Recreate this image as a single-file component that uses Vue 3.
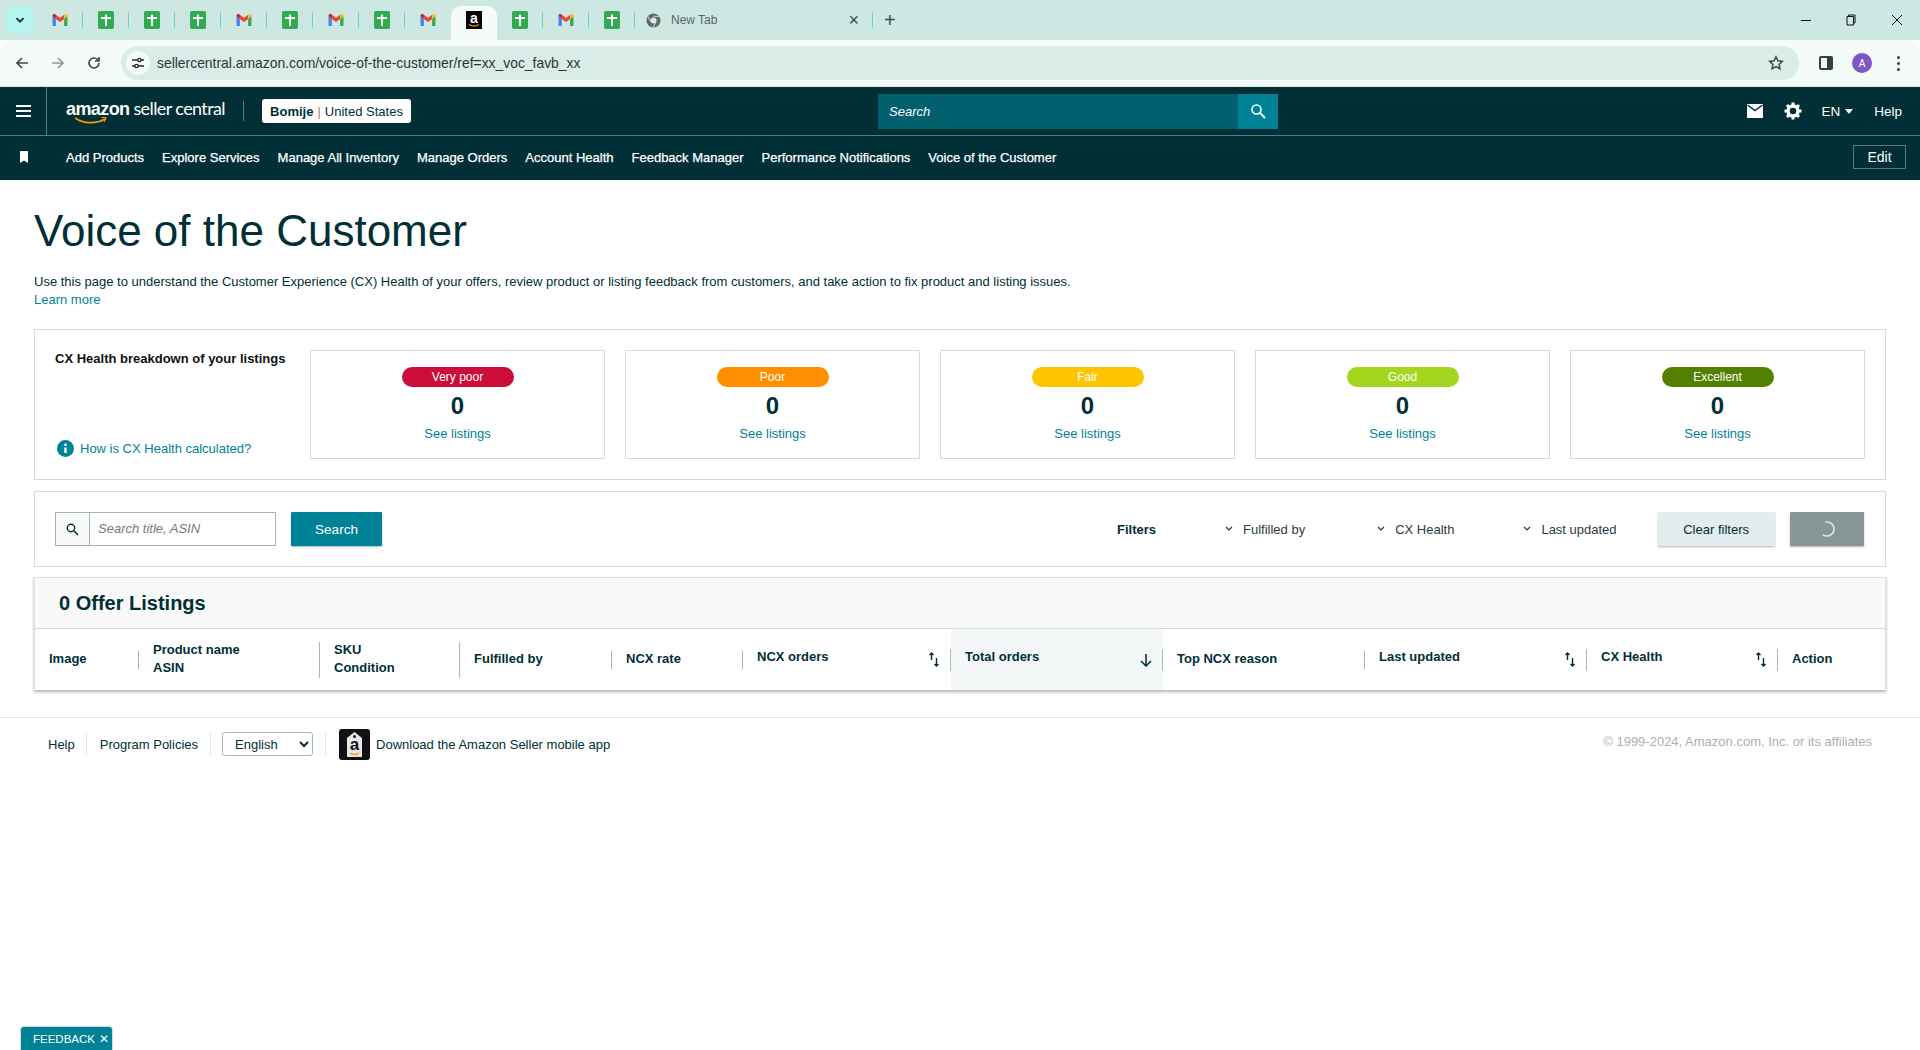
<template>
  <div class="page">
    <!-- browser chrome -->
    <div class="tabstrip">
      <div class="tab-search">
        <svg width="10" height="10" viewBox="0 0 10 10"><path d="M1.5 3.2 5 6.8l3.5-3.6" fill="none" stroke="#1f2b2a" stroke-width="1.8" /></svg>
      </div>
      <div v-for="(t, i) in tabs" :key="i" class="tab" :class="{ active: t === 'a', nosep: t === 'a' || tabs[i + 1] === 'a' }">
        <svg v-if="t === 'm'" width="18" height="18" viewBox="0 0 24 24">
          <path d="M2 7v13h4.5V10.5z" fill="#4285f4" />
          <path d="M22 7v13h-4.500V10.500z" fill="#34a853" />
          <path d="M6.500 10.500 12 14.800l5.500-4.300V5L12 9.300 6.500 5z" fill="#ea4335" />
          <path d="M17.500 5v5.500L22 7V6.500c0-2.500-2.600-3.200-4-1.900z" fill="#fbbc04" />
          <path d="M2 7l4.500 3.500V5L6 4.600C4.600 3.300 2 4 2 6.500z" fill="#c5221f" />
        </svg>
        <svg v-else-if="t === 's'" width="16" height="18" viewBox="0 0 16 18">
          <rect width="16" height="18" rx="2" fill="#34a853" />
          <path d="M3 7h10M8 3.500V15" stroke="#fff" stroke-width="1.800" />
        </svg>
        <svg v-else width="16" height="18" viewBox="0 0 16 18">
          <rect width="16" height="18" fill="#000" />
          <text x="8" y="11.500" text-anchor="middle" class="fav-a">a</text>
          <path d="M3 13.500c3 2 7 2 10 0" fill="none" stroke="#f90" stroke-width="1.300" />
        </svg>
      </div>
      <div class="tab newtab">
        <svg width="15" height="15" viewBox="0 0 16 16">
          <circle cx="8" cy="8" r="7.500" fill="#5f6b69" />
          <circle cx="8" cy="8" r="3.200" fill="#dce9e6" />
          <path d="M8 3.500h6.500M5 9 2 3.500M10.500 9.500l-3 6" stroke="#dce9e6" stroke-width="1" />
        </svg>
        <span class="newtab-label">New Tab</span>
        <span class="newtab-x">×</span>
      </div>
      <span class="plus">+</span>
      <div class="win">
        <span class="w-min"></span>
        <svg width="12" height="12" viewBox="0 0 12 12"><path d="M3.500 2.500V1h6.500v8H8.500M2 2.500h6.500V11H2z" fill="none" stroke="#111" stroke-width="1" /></svg>
        <svg width="12" height="12" viewBox="0 0 12 12"><path d="M1 1l10 10M11 1 1 11" stroke="#111" stroke-width="1" /></svg>
      </div>
    </div>
    <div class="toolbar">
      <svg class="tb-ico" width="16" height="16" viewBox="0 0 16 16"><path d="M14 8H3M8 3 3 8l5 5" fill="none" stroke="#3c4a48" stroke-width="1.700" /></svg>
      <svg class="tb-ico" width="16" height="16" viewBox="0 0 16 16"><path d="M2 8h11M8 3l5 5-5 5" fill="none" stroke="#8d9a97" stroke-width="1.700" /></svg>
      <svg class="tb-ico" width="16" height="16" viewBox="0 0 16 16"><path d="M13 8a5 5 0 1 1-1.500-3.600L13 6M13 2v4H9" fill="none" stroke="#3c4a48" stroke-width="1.600" /></svg>
      <div class="address">
        <span class="site-chip">
          <svg width="14" height="14" viewBox="0 0 14 14"><path d="M1 4h6M10 4h3M1 10h3M7 10h6" stroke="#1f2b2a" stroke-width="1.300" /><circle cx="8.500" cy="4" r="1.700" fill="none" stroke="#1f2b2a" stroke-width="1.300" /><circle cx="5.500" cy="10" r="1.700" fill="none" stroke="#1f2b2a" stroke-width="1.300" /></svg>
        </span>
        <span class="url">sellercentral.amazon.com/voice-of-the-customer/ref=xx_voc_favb_xx</span>
        <svg class="star" width="16" height="16" viewBox="0 0 16 16"><path d="m8 1.800 1.900 4 4.400.6-3.200 3 .8 4.400L8 11.700l-3.900 2.100.8-4.400-3.200-3 4.400-.6z" fill="none" stroke="#3c4a48" stroke-width="1.500" /></svg>
      </div>
      <svg class="panel" width="14" height="14" viewBox="0 0 14 14"><rect x="1" y="1" width="12" height="12" rx="1" fill="none" stroke="#2f4240" stroke-width="2" /><rect x="8" y="1" width="5" height="12" fill="#2f4240" /></svg>
      <span class="avatar">A</span>
      <span class="dots"><i></i><i></i><i></i></span>
    </div>

    <!-- seller central header -->
    <header class="sc-top">
      <button class="burger"><i></i><i></i><i></i></button>
      <div class="logo">
        <span class="logo-a">amazon<svg class="smile" width="34" height="8" viewBox="0 0 34 8"><path d="M1 1c9 6 21 6 30 1" fill="none" stroke="#f90" stroke-width="1.600" /><path d="m27 0 5 1-2 4" fill="none" stroke="#f90" stroke-width="1.200" /></svg></span>
        <span class="logo-b">seller central</span>
      </div>
      <span class="logo-sep"></span>
      <div class="acct"><b>Bomije</b><em>|</em>United States</div>
      <div class="top-search">
        <span class="top-search-input">Search</span>
        <span class="top-search-btn">
          <svg width="16" height="16" viewBox="0 0 16 16"><circle cx="6.500" cy="6.500" r="4.500" fill="none" stroke="#fff" stroke-width="1.600" /><path d="m10 10 5 5" stroke="#fff" stroke-width="1.800" /></svg>
        </span>
      </div>
      <div class="top-right">
        <svg width="18" height="16" viewBox="0 0 18 16"><path d="M1 1h16v14H1z" fill="#fff" /><path d="m1.500 2 7.500 5.500L16.500 2" fill="none" stroke="#002f36" stroke-width="1.500" /></svg>
        <svg class="gear" width="18" height="18" viewBox="0 0 18 18"><circle cx="9" cy="9" r="5" fill="none" stroke="#fff" stroke-width="3.400" /><path d="M9 .5v3M9 14.500v3M.5 9h3M14.500 9h3M3 3l2.100 2.100M12.900 12.900 15 15M3 15l2.100-2.100M12.900 5.100 15 3" stroke="#fff" stroke-width="3" /></svg>
        <span class="lang">EN<i class="caret"></i></span>
        <span class="help">Help</span>
      </div>
    </header>
    <nav class="sc-nav">
      <svg class="bookmark" width="10" height="12" viewBox="0 0 10 12"><path d="M1 0h8v12L5 9.500 1 12z" fill="#fff" /></svg>
      <a v-for="n in navItems" :key="n">{{ n }}</a>
      <button class="edit">Edit</button>
    </nav>

    <main class="content">
      <h1>Voice of the Customer</h1>
      <p class="intro">Use this page to understand the Customer Experience (CX) Health of your offers, review product or listing feedback from customers, and take action to fix product and listing issues.</p>
      <a class="learn">Learn more</a>

      <section class="box health">
        <div class="health-side">
          <b>CX Health breakdown of your listings</b>
          <div class="how">
            <svg width="17" height="17" viewBox="0 0 17 17"><circle cx="8.500" cy="8.500" r="8.500" fill="#008296" /><path d="M8.500 7.500v5.500" stroke="#fff" stroke-width="2.400" /><circle cx="8.500" cy="4.800" r="1.400" fill="#fff" /></svg>
            <a>How is CX Health calculated?</a>
          </div>
        </div>
        <div v-for="c in healthCards" :key="c.label" class="hcard">
          <span class="pill" :class="c.cls">{{ c.label }}</span>
          <strong>0</strong>
          <a>See listings</a>
        </div>
      </section>

      <section class="box filters">
        <div class="search-group">
          <span class="sg-ico">
            <svg width="13" height="13" viewBox="0 0 13 13"><circle cx="5" cy="5" r="3.700" fill="none" stroke="#002f36" stroke-width="1.400" /><path d="m8 8 4 4" stroke="#002f36" stroke-width="1.600" /></svg>
          </span>
          <span class="sg-input">Search title, ASIN</span>
        </div>
        <button class="btn-primary">Search</button>
        <b class="filters-label">Filters</b>
        <span class="dd dd1"><svg width="8" height="6" viewBox="0 0 8 6"><path d="m1 1 3 3 3-3" fill="none" stroke="#333" stroke-width="1.200" /></svg>Fulfilled by</span>
        <span class="dd dd2"><svg width="8" height="6" viewBox="0 0 8 6"><path d="m1 1 3 3 3-3" fill="none" stroke="#333" stroke-width="1.200" /></svg>CX Health</span>
        <span class="dd dd3"><svg width="8" height="6" viewBox="0 0 8 6"><path d="m1 1 3 3 3-3" fill="none" stroke="#333" stroke-width="1.200" /></svg>Last updated</span>
        <button class="btn-clear">Clear filters</button>
        <button class="btn-spin">
          <svg width="18" height="18" viewBox="0 0 18 18"><path d="M9 2a7 7 0 1 1-5.500 11.300" transform="rotate(-15 9 9)" fill="none" stroke="#dfe5e4" stroke-width="1.500" /></svg>
        </button>
      </section>

      <section class="listings">
        <h2>0 Offer Listings</h2>
        <div class="thead">
          <div v-for="col in columns" :key="col.key" class="th" :class="[col.key, { sorted: col.sorted }]">
            <span class="th-label" :class="{ raised: col.sort }">
              <template v-for="(line, i) in col.lines" :key="i">{{ line }}<br v-if="i < col.lines.length - 1" /></template>
            </span>
            <svg v-if="col.sort" class="sort" width="12" height="15" viewBox="0 0 12 15"><path d="M3.500 8V1M1.500 3l2-2 2 2" fill="none" stroke="#002f36" stroke-width="1.400" /><path d="M8.500 6v8M6.500 12l2 2 2-2" fill="none" stroke="#002f36" stroke-width="1.400" /></svg>
            <svg v-if="col.sorted" class="sort down" width="14" height="14" viewBox="0 0 14 14"><path d="M7 1v12M2 8l5 5 5-5" fill="none" stroke="#002f36" stroke-width="1.500" /></svg>
            <i v-if="col.sep" class="sep" :style="{ height: col.sep + 'px' }"></i>
          </div>
        </div>
      </section>
    </main>

    <footer class="foot">
      <a class="f-link">Help</a>
      <i class="f-sep first"></i>
      <a class="f-link">Program Policies</a>
      <i class="f-sep"></i>
      <select class="f-select"><option>English</option></select>
      <i class="f-sep"></i>
      <svg class="app-ico" width="31" height="31" viewBox="0 0 31 31">
        <rect width="31" height="31" rx="3" fill="#111" />
        <path d="M8 9 15.500 3 23 9v19H8z" fill="#e8e8e8" />
        <circle cx="15.500" cy="7.500" r="1.500" fill="#111" />
        <text x="15.500" y="21" text-anchor="middle" class="app-a">a</text>
        <path d="M11 24c3 1.800 6.500 1.800 9 0" fill="none" stroke="#f90" stroke-width="1.400" />
      </svg>
      <a class="f-link app-link">Download the Amazon Seller mobile app</a>
      <span class="copy">© 1999-2024, Amazon.com, Inc. or its affiliates</span>
    </footer>

    <div class="feedback">FEEDBACK <span>✕</span></div>
  </div>
</template>

<script setup>
const tabs = ["m", "s", "s", "s", "m", "s", "m", "s", "m", "a", "s", "m", "s"];

const navItems = [
  "Add Products",
  "Explore Services",
  "Manage All Inventory",
  "Manage Orders",
  "Account Health",
  "Feedback Manager",
  "Performance Notifications",
  "Voice of the Customer"
];

const healthCards = [
  { label: "Very poor", cls: "p-vpoor" },
  { label: "Poor", cls: "p-poor" },
  { label: "Fair", cls: "p-fair" },
  { label: "Good", cls: "p-good" },
  { label: "Excellent", cls: "p-excellent" }
];

const columns = [
  { key: "c-image", lines: ["Image"], sep: 18 },
  { key: "c-name", lines: ["Product name", "ASIN"], sep: 36 },
  { key: "c-sku", lines: ["SKU", "Condition"], sep: 36 },
  { key: "c-ful", lines: ["Fulfilled by"], sep: 18 },
  { key: "c-rate", lines: ["NCX rate"], sep: 18 },
  { key: "c-orders", lines: ["NCX orders"], sep: 22, sort: true },
  { key: "c-total", lines: ["Total orders"], sep: 22, sorted: true },
  { key: "c-top", lines: ["Top NCX reason"], sep: 18 },
  { key: "c-last", lines: ["Last updated"], sep: 22, sort: true },
  { key: "c-health", lines: ["CX Health"], sep: 22, sort: true },
  { key: "c-action", lines: ["Action"] }
];
</script>

<style>
html,
body {
  margin: 0;
  background: #fff;
}
</style>

<style scoped>
.page {
  position: relative;
  height: 1050px;
  overflow: hidden;
  font-family: "Liberation Sans", Arial, sans-serif;
  color: #002f36;
  font-size: 13px;
}
a {
  color: #008296;
}

/* browser chrome */
.tabstrip {
  display: flex;
  align-items: center;
  height: 40px;
  background: #cde8e2;
}
.tab-search {
  width: 28px;
  height: 28px;
  margin-left: 6px;
  margin-right: 3px;
  border-radius: 10px;
  background: #b6f5ee;
  display: flex;
  align-items: center;
  justify-content: center;
}
.tab {
  position: relative;
  width: 46px;
  height: 40px;
  display: flex;
  align-items: center;
  justify-content: center;
}
.tab::after {
  content: "";
  position: absolute;
  right: 0;
  top: 12px;
  height: 16px;
  width: 1px;
  background: #6fd0c6;
}
.tab.nosep::after {
  display: none;
}
.tab.active {
  height: 34px;
  margin-top: 6px;
  background: #f4fbf8;
  border-radius: 10px 10px 0 0;
}
.tab.active svg {
  margin-top: -6px;
}
.fav-a {
  font: 700 14px "Liberation Sans", Arial, sans-serif;
  fill: #fff;
}
.app-a {
  font: 700 17px "Liberation Sans", Arial, sans-serif;
  fill: #111;
}
.newtab {
  width: 238px;
  justify-content: flex-start;
  padding-left: 11px;
  box-sizing: border-box;
}
.newtab-label {
  margin-left: 10px;
  font-size: 12px;
  color: #5a6664;
}
.newtab-x {
  margin-left: auto;
  margin-right: 14px;
  font-size: 18px;
  color: #3c4a48;
}
.plus {
  margin-left: 11px;
  font-size: 20px;
  color: #3c4a48;
}
.win {
  margin-left: auto;
  display: flex;
  align-items: center;
  gap: 34px;
  padding-right: 17px;
}
.w-min {
  width: 10px;
  height: 1px;
  background: #111;
}
.toolbar {
  display: flex;
  align-items: center;
  height: 47px;
  box-sizing: border-box;
  background: #f4fbf8;
  border-radius: 8px 8px 0 0;
  border-bottom: 1px solid #dfe8e5;
}
.tb-ico {
  margin-left: 14px;
  margin-right: 6px;
  flex: none;
}
.address {
  display: flex;
  align-items: center;
  width: 1678px;
  height: 34px;
  margin-left: 13px;
  border-radius: 17px;
  background: #d9ece7;
}
.site-chip {
  width: 24px;
  height: 24px;
  margin-left: 5px;
  border-radius: 50%;
  background: #f4fbf8;
  display: flex;
  align-items: center;
  justify-content: center;
}
.url {
  margin-left: 7px;
  font-size: 13.900px;
  color: #2a3634;
}
.star {
  margin-left: auto;
  margin-right: 15px;
}
.panel {
  margin-left: 20px;
}
.avatar {
  width: 20px;
  height: 20px;
  margin-left: 19px;
  border-radius: 50%;
  background: #7e57c2;
  color: #fff;
  font-size: 10px;
  display: flex;
  align-items: center;
  justify-content: center;
}
.dots {
  margin-left: 25px;
  display: flex;
  flex-direction: column;
  gap: 3px;
}
.dots i {
  width: 3px;
  height: 3px;
  border-radius: 50%;
  background: #2f4240;
}

/* seller central header */
.sc-top {
  display: flex;
  align-items: center;
  height: 48px;
  background: #002f36;
  border-bottom: 1px solid #5f7a7e;
  color: #fff;
}
.burger {
  width: 47px;
  height: 48px;
  padding: 0;
  background: none;
  border: 0;
  border-right: 1px solid #5f7a7e;
  display: flex;
  flex-direction: column;
  align-items: center;
  justify-content: center;
  gap: 3px;
  box-sizing: border-box;
}
.burger i {
  width: 15px;
  height: 2px;
  background: #fff;
}
.logo {
  display: flex;
  align-items: baseline;
  width: 177px;
  flex: none;
  margin-left: 19px;
  margin-top: -6px;
  font-size: 18px;
}
.logo-a {
  position: relative;
  font-weight: 700;
  letter-spacing: -0.6px;
}
.smile {
  position: absolute;
  left: 8px;
  top: 18px;
}
.logo-b {
  margin-left: 4px;
  font-family: Lato, sans-serif;
  font-weight: 400;
  letter-spacing: -0.6px;
}
.logo-sep {
  width: 1px;
  height: 20px;
  background: #5f7a7e;
}
.acct {
  margin-left: 18px;
  width: 149px;
  height: 24px;
  box-sizing: border-box;
  background: #fff;
  border-radius: 3px;
  color: #002f36;
  display: flex;
  align-items: center;
  justify-content: center;
  font-size: 13px;
}
.acct em {
  margin: 0 4px;
  font-style: normal;
  color: #c77f2a;
}
.top-search {
  display: flex;
  height: 35px;
  margin-left: 467px;
}
.top-search-input {
  width: 360px;
  padding-left: 11px;
  box-sizing: border-box;
  background: #00606e;
  font-style: italic;
  font-size: 13px;
  line-height: 35px;
}
.top-search-btn {
  width: 40px;
  background: #008296;
  display: flex;
  align-items: center;
  justify-content: center;
}
.top-right {
  margin-left: auto;
  display: flex;
  align-items: center;
  padding-right: 18px;
  font-size: 13.500px;
}
.gear {
  margin-left: 20px;
}
.lang {
  margin-left: 19px;
  display: flex;
  align-items: center;
}
.caret {
  margin-left: 5px;
  border: 4px solid transparent;
  border-top: 5px solid #fff;
  border-bottom: 0;
}
.help {
  margin-left: 21px;
}
.sc-nav {
  display: flex;
  align-items: center;
  height: 44px;
  box-sizing: border-box;
  padding-bottom: 2px;
  background: #002f36;
}
.bookmark {
  margin-left: 19px;
  margin-right: 37px;
}
.sc-nav a {
  color: #fff;
  font-size: 13px;
  -webkit-text-stroke: 0.25px #fff;
  margin-right: 18px;
}
.edit {
  margin-left: auto;
  margin-right: 14px;
  width: 53px;
  height: 24px;
  padding: 0;
  background: none;
  border: 1px solid #5f7a7e;
  color: #fff;
  font: 14px "Liberation Sans", Arial, sans-serif;
}

/* page */
.content {
  padding: 0 34px;
}
h1 {
  margin: 24px 0 0;
  font-size: 44px;
  line-height: 54px;
  font-weight: 400;
}
.intro {
  margin: 15px 0 0;
  font-size: 13px;
  line-height: 18px;
  color: #002f36;
}
.learn {
  display: block;
  font-size: 13px;
  line-height: 18px;
}
.box {
  border: 1px solid #d5dbdb;
}
.health {
  display: flex;
  gap: 20px;
  height: 151px;
  margin-top: 20px;
  padding: 20px;
  box-sizing: border-box;
}
.health-side {
  width: 235px;
  display: flex;
  flex-direction: column;
  justify-content: space-between;
  font-size: 13px;
  padding-top: 1px;
  padding-bottom: 2px;
  color: #0f1111;
}
.how {
  display: flex;
  align-items: center;
  gap: 6px;
  margin-left: 2px;
  font-size: 13px;
}
.hcard {
  flex: 1;
  border: 1px solid #d5dbdb;
  display: flex;
  flex-direction: column;
  align-items: center;
  padding-top: 16px;
  font-size: 13px;
}
.pill {
  width: 112px;
  height: 20px;
  border-radius: 10px;
  color: #fff;
  font-size: 12px;
  line-height: 20px;
  text-align: center;
}
.hcard strong {
  margin-top: 4px;
  font-size: 24px;
  line-height: 30px;
}
.hcard a {
  margin-top: 4px;
  line-height: 18px;
}
.p-vpoor {
  background: #cc0c39;
}
.p-poor {
  background: #ff8f00;
}
.p-fair {
  background: #ffc400;
}
.p-good {
  background: #a4d61f;
}
.p-excellent {
  background: #538000;
}
.filters {
  display: flex;
  align-items: center;
  height: 76px;
  margin-top: 11px;
  padding-left: 20px;
  box-sizing: border-box;
}
.search-group {
  display: flex;
  width: 221px;
  height: 34px;
  box-sizing: border-box;
  border: 1px solid #a6b2b2;
}
.sg-ico {
  width: 33px;
  border-right: 1px solid #a6b2b2;
  background: #f8fafa;
  display: flex;
  align-items: center;
  justify-content: center;
}
.sg-input {
  padding-left: 8px;
  font-style: italic;
  font-size: 13px;
  line-height: 32px;
  color: #6f7b7d;
}
button {
  font-family: "Liberation Sans", Arial, sans-serif;
}
.btn-primary {
  width: 91px;
  height: 34px;
  margin-left: 15px;
  background: #008296;
  border: 0;
  border-radius: 1px;
  color: #fff;
  font-size: 13.500px;
  box-shadow: 0 1px 2px rgba(0, 0, 0, 0.3);
}
.filters-label {
  margin-left: 735px;
  font-size: 13px;
}
.dd {
  display: flex;
  align-items: center;
  gap: 10px;
  font-size: 13px;
  color: #2a3c40;
}
.dd1 {
  margin-left: 69px;
}
.dd2 {
  margin-left: 72px;
}
.dd3 {
  margin-left: 69px;
}
.btn-clear {
  width: 117px;
  height: 34px;
  margin-left: 41px;
  background: #e3ecee;
  border: 0;
  border-radius: 1px;
  color: #002f36;
  font-size: 13px;
  box-shadow: 0 1px 2px rgba(0, 0, 0, 0.3);
}
.btn-spin {
  width: 74px;
  height: 34px;
  margin-left: 15px;
  background: #879596;
  border: 0;
  border-radius: 1px;
  display: flex;
  align-items: center;
  justify-content: center;
  box-shadow: 0 1px 2px rgba(0, 0, 0, 0.3);
}
.listings {
  margin-top: 10px;
  border: 1px solid #dde2e2;
  border-bottom: 0;
  box-shadow: 0 2px 3px rgba(0, 0, 0, 0.3);
}
h2 {
  margin: 0;
  height: 50px;
  padding-left: 24px;
  background: #f9f9f9;
  border-bottom: 1px solid #d5dbdb;
  font-size: 20px;
  font-weight: 700;
  line-height: 50px;
}
.thead {
  display: grid;
  grid-template-columns: 104px 181px 140px 152px 131px 208px 212px 202px 222px 191px 1fr;
  height: 61px;
}
.th {
  display: flex;
  align-items: center;
  padding-left: 14px;
  font-weight: 700;
  font-size: 13px;
  line-height: 18px;
}
.th-label {
  margin-top: -1px;
}
.th-label.raised {
  margin-top: -5px;
}
.sorted {
  background: #f3f7f8;
}
.sorted .th-label {
  margin-top: -5px;
}
.sort {
  margin-left: auto;
  margin-right: 10px;
}
.sort.down {
  margin-right: 9px;
}
.sep {
  margin-left: auto;
  width: 1px;
  background: #aab7b8;
}
.sort + .sep {
  margin-left: 0;
}
.foot {
  display: flex;
  align-items: center;
  height: 52px;
  margin-top: 27px;
  padding-left: 48px;
  padding-right: 48px;
  border-top: 1px solid #e3e6e6;
  font-size: 13px;
}
.f-link {
  color: #002f36;
}
.f-sep {
  width: 1px;
  height: 22px;
  margin: 0 12px;
  background: #e3e6e6;
}
.f-sep.first {
  margin: 0 13px 0 11px;
}
.f-select {
  width: 91px;
  height: 24px;
  margin-left: -1px;
  padding-left: 8px;
  background: #fff;
  border: 1px solid #aab7b8;
  border-radius: 3px;
  font: 13px "Liberation Sans", Arial, sans-serif;
  color: #002f36;
}
.app-ico {
  margin-left: 1px;
}
.app-link {
  margin-left: 6px;
}
.copy {
  margin-left: auto;
  margin-top: -5px;
  color: #aab0b1;
  font-size: 13px;
}
.feedback {
  position: absolute;
  left: 21px;
  bottom: 0;
  width: 91px;
  height: 23px;
  box-sizing: border-box;
  padding-left: 12px;
  background: #008296;
  border-radius: 3px 3px 0 0;
  color: #fff;
  font-size: 11.500px;
  line-height: 24px;
  box-shadow: 0 0 0 1px #d5dbdb;
}
.feedback span {
  margin-left: 1px;
}
</style>
